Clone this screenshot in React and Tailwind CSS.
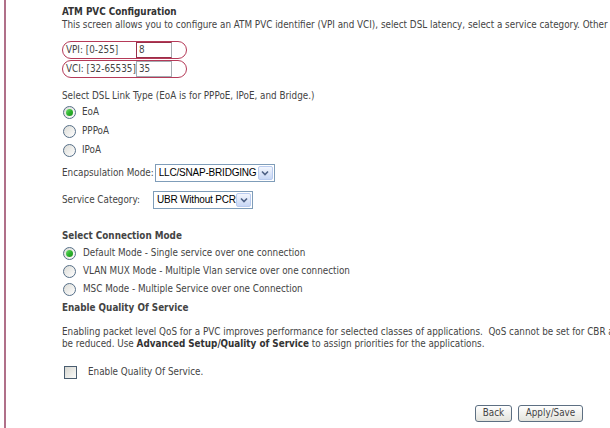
import React, { useState } from "react";

const txt = "font-['DejaVu_Sans_Condensed','DejaVu_Sans',sans-serif] text-[9.8px] text-[#444] whitespace-nowrap";

const Radio = ({ checked, onClick }) => (
  <span
    onClick={onClick}
    className="relative ml-[1px] flex h-[13px] w-[13px] shrink-0 items-center justify-center rounded-full border border-[#566f88] bg-gradient-to-br from-[#dcdcd7] to-white"
  >
    {checked && (
      <span className="h-[7px] w-[7px] rounded-full bg-gradient-to-br from-[#6fe06f] via-[#2fb52f] to-[#1a8f1a]" />
    )}
  </span>
);

const Select = ({ value, width }) => (
  <div
    className={`flex h-[18px] shrink-0 items-center border border-[#7f9db9] bg-white pl-[3px] pr-[1px] font-['Liberation_Sans',Arial,sans-serif] text-[10px] tracking-[-0.2px] whitespace-nowrap text-black ${width}`}
  >
    <span className="flex-1 overflow-hidden leading-none">{value}</span>
    <span className="flex h-[14px] w-[15px] shrink-0 items-center justify-center rounded-[2px] border border-[#b9cbef] bg-gradient-to-b from-[#f3f6fd] to-[#c8d7f5]">
      <svg width="8" height="6" viewBox="0 0 8 6">
        <path d="M1 1.5 L4 4.5 L7 1.5" fill="none" stroke="#4d6185" strokeWidth="1.6" />
      </svg>
    </span>
  </div>
);

const Button = ({ children, width }) => (
  <button
    type="button"
    className={`flex h-[17px] shrink-0 items-center justify-center rounded-[3px] border border-[#5d6f82] bg-gradient-to-b from-white to-[#e3e3dc] ${txt} ${width}`}
  >
    {children}
  </button>
);

export default function App() {
  const [link, setLink] = useState("EoA");
  const [mode, setMode] = useState("default");
  const [qos, setQos] = useState(false);

  return (
    <div className="h-[428px] w-[610px] overflow-hidden bg-white pl-[4px]">
      <div className="h-full w-[800px] border-l-2 border-[#b07089] pl-[56px] pt-[5px]">
        <div className={`${txt} leading-[13px]`}>
          <div className="font-bold text-[#333]">ATM PVC Configuration</div>
          <div>
            This screen allows you to configure an ATM PVC identifier (VPI and VCI), select DSL latency, select a service
            category. Other fields are optional.
          </div>
        </div>

        <div className="mt-[10px] flex h-[18px] w-[125px] items-center rounded-full border-[1.5px] border-[#b53a58] pl-[3px]">
          <span className={`${txt} w-[70px] shrink-0`}>VPI: [0-255]</span>
          <span className={`flex h-[16px] w-[36px] shrink-0 items-center border border-[#9a2f48] border-r-[#a5acb2] bg-white pl-[2px] ${txt}`}>
            8
          </span>
        </div>
        <div className="mt-[1px] flex h-[18px] w-[125px] items-center rounded-full border-[1.5px] border-[#b53a58] pl-[3px]">
          <span className={`${txt} w-[70px] shrink-0`}>VCI: [32-65535]</span>
          <span className={`flex h-[16px] w-[36px] shrink-0 items-center border border-[#a5acb2] bg-white pl-[2px] ${txt}`}>
            35
          </span>
        </div>

        <div className={`${txt} mt-[11px] leading-[13px]`}>
          Select DSL Link Type (EoA is for PPPoE, IPoE, and Bridge.)
        </div>
        <div className="mt-[1px] flex flex-col">
          {["EoA", "PPPoA", "IPoA"].map((t) => (
            <label key={t} className="flex h-[19px] items-center gap-[6px]">
              <Radio checked={link === t} onClick={() => setLink(t)} />
              <span className={txt}>{t}</span>
            </label>
          ))}
        </div>

        <div className="mt-[4px] flex items-center gap-[1px]">
          <span className={`${txt} shrink-0`}>Encapsulation Mode:</span>
          <Select value="LLC/SNAP-BRIDGING" width="w-[120px]" />
        </div>
        <div className="mt-[9px] flex items-center">
          <span className={`${txt} w-[91px] shrink-0`}>Service Category:</span>
          <Select value="UBR Without PCR" width="w-[100px]" />
        </div>

        <div className={`${txt} mt-[20px] font-bold leading-[13px] text-[#333]`}>Select Connection Mode</div>
        <div className="mt-[2px] flex flex-col">
          {[
            ["default", "Default Mode - Single service over one connection"],
            ["vlan", "VLAN MUX Mode - Multiple Vlan service over one connection"],
            ["msc", "MSC Mode - Multiple Service over one Connection"],
          ].map(([k, t]) => (
            <label key={k} className="flex h-[18px] items-center gap-[7px]">
              <Radio checked={mode === k} onClick={() => setMode(k)} />
              <span className={txt}>{t}</span>
            </label>
          ))}
        </div>

        <div className={`${txt} mt-[3px] font-bold leading-[13px] text-[#333]`}>Enable Quality Of Service</div>
        <div className={`${txt} mt-[12px] leading-[12px]`}>
          Enabling packet level QoS for a PVC improves performance for selected classes of applications.&nbsp; QoS cannot be
          set for CBR and Realtime VBR.
          <br />
          be reduced. Use <b className="text-[#333]">Advanced Setup/Quality of Service</b> to assign priorities for the
          applications.
        </div>

        <label className="mt-[15px] flex h-[14px] items-center gap-[11px]">
          <span
            onClick={() => setQos(!qos)}
            className="ml-[2px] flex h-[13px] w-[13px] shrink-0 items-center justify-center border border-[#4a5d70] bg-gradient-to-br from-[#d6d6d0] to-[#fbfbf9]"
          >
            {qos && (
              <svg width="9" height="9" viewBox="0 0 9 9">
                <path d="M1 4.5 L3.5 7 L8 1.5" fill="none" stroke="#21a121" strokeWidth="1.8" />
              </svg>
            )}
          </span>
          <span className={txt}>Enable Quality Of Service.</span>
        </label>

        <div className="mt-[26px] flex gap-[6px] pl-[413px]">
          <Button width="w-[37px]">Back</Button>
          <Button width="w-[65px]">Apply/Save</Button>
        </div>
      </div>
    </div>
  );
}
